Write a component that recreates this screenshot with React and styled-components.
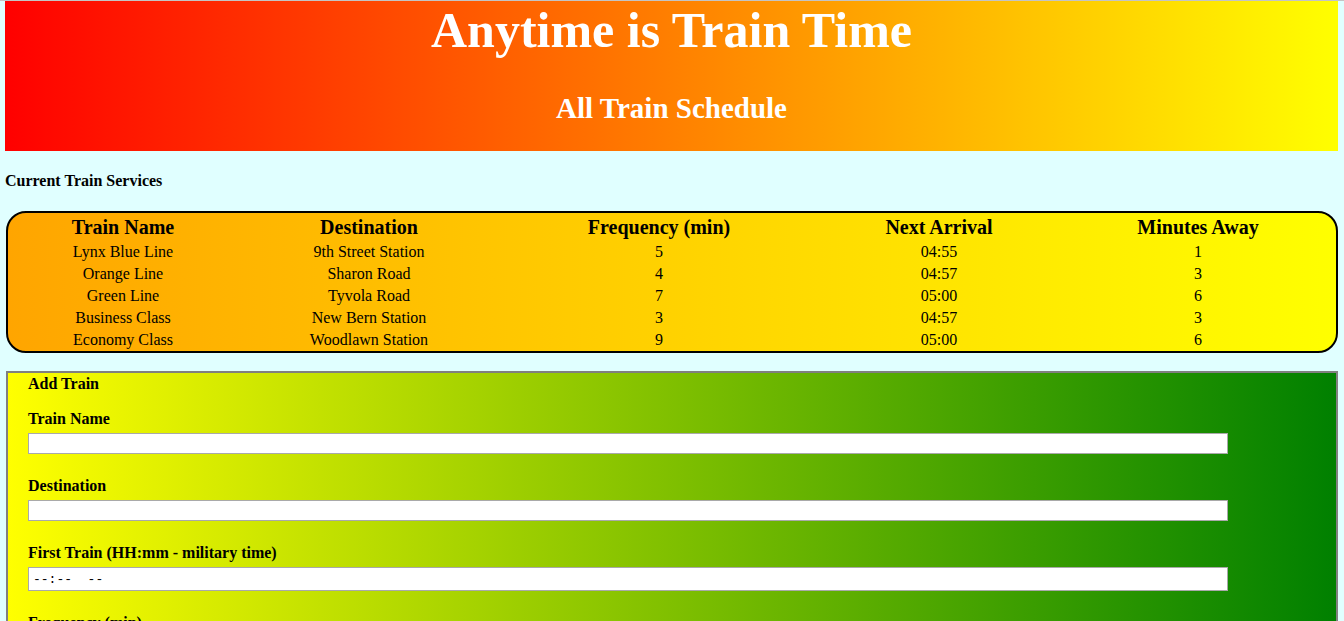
import React from "react";
import styled, { createGlobalStyle } from "styled-components";

const Global = createGlobalStyle`
  html, body { margin: 0; padding: 0; }
  body {
    background: #e0ffff;
    border-top: 1px solid #c4c4c4;
    font-family: "Liberation Serif", "Times New Roman", serif;
    color: #000;
  }
`;

const Page = styled.div`
  padding: 0 6px 0 5px;
  display: flex;
  flex-direction: column;
`;

const Jumbo = styled.header`
  height: 150px;
  background: linear-gradient(to right, #ff0000, #ffff00);
  color: #fff;
  text-align: center;
  display: flex;
  flex-direction: column;
  align-items: center;
`;

const Title = styled.h1`
  margin: 0;
  padding-top: 1px;
  font-size: 50px;
  line-height: 56px;
  font-weight: bold;
`;

const Subtitle = styled.h2`
  margin: 0;
  padding-top: 34px;
  font-size: 29px;
  line-height: 32px;
  font-weight: bold;
`;

const SectionTitle = styled.h4`
  margin: 0;
  padding-top: 21px;
  font-size: 16px;
  line-height: 18px;
  font-weight: bold;
`;

const Schedule = styled.div`
  margin: 21px 0 0 1px;
  border: 2px solid #000;
  border-radius: 20px;
  background: linear-gradient(to right, #ffa500, #ffff00);
  display: grid;
  grid-template-columns: 230px 262px 318px 242px 1fr;
  text-align: center;
`;

const Th = styled.div`
  height: 28px;
  line-height: 29px;
  font-size: 20px;
  font-weight: bold;
`;

const Td = styled.div`
  height: 22px;
  line-height: 22px;
  font-size: 16px;
`;

const FormPanel = styled.form`
  margin: 18px 0 0 1px;
  border: 2px solid #808080;
  border-bottom: none;
  background: linear-gradient(to right, #ffff00, #008000);
  padding: 0 0 40px 20px;
  display: flex;
  flex-direction: column;
`;

const FormTitle = styled.h5`
  margin: 0;
  padding-top: 2px;
  font-size: 16px;
  line-height: 18px;
  font-weight: bold;
`;

const Field = styled.div`
  display: flex;
  flex-direction: column;
  align-items: flex-start;
  padding-top: ${(p) => p.$top}px;
`;

const Label = styled.label`
  font-size: 16px;
  line-height: 18px;
  font-weight: bold;
  margin-bottom: 5px;
`;

const Input = styled.input`
  box-sizing: border-box;
  width: 1200px;
  height: ${(p) => (p.$tall ? 24 : 21)}px;
  margin: 0;
  padding: 0 4px;
  border: 1px solid #a9a9a9;
  background: #fff;
  font-family: "Liberation Mono", "Courier New", monospace;
  font-size: 13px;
  color: #000;
  outline: none;
  &::placeholder {
    color: #000;
    opacity: 1;
  }
`;

const trains = [
  ["Lynx Blue Line", "9th Street Station", "5", "04:55", "1"],
  ["Orange Line", "Sharon Road", "4", "04:57", "3"],
  ["Green Line", "Tyvola Road", "7", "05:00", "6"],
  ["Business Class", "New Bern Station", "3", "04:57", "3"],
  ["Economy Class", "Woodlawn Station", "9", "05:00", "6"],
];

const heads = ["Train Name", "Destination", "Frequency (min)", "Next Arrival", "Minutes Away"];

export default function App() {
  return (
    <>
      <Global />
      <Page>
        <Jumbo>
          <Title>Anytime is Train Time</Title>
          <Subtitle>All Train Schedule</Subtitle>
        </Jumbo>
        <SectionTitle>Current Train Services</SectionTitle>
        <Schedule>
          {heads.map((h) => (
            <Th key={h}>{h}</Th>
          ))}
          {trains.map((row, i) =>
            row.map((c, j) => <Td key={i + "-" + j}>{c}</Td>)
          )}
        </Schedule>
        <FormPanel onSubmit={(e) => e.preventDefault()}>
          <FormTitle>Add Train</FormTitle>
          <Field $top={17}>
            <Label>Train Name</Label>
            <Input type="text" />
          </Field>
          <Field $top={23}>
            <Label>Destination</Label>
            <Input type="text" />
          </Field>
          <Field $top={23}>
            <Label>First Train (HH:mm - military time)</Label>
            <Input type="text" $tall placeholder="--:--  --" />
          </Field>
          <Field $top={23}>
            <Label>Frequency (min)</Label>
            <Input type="text" />
          </Field>
        </FormPanel>
      </Page>
    </>
  );
}
